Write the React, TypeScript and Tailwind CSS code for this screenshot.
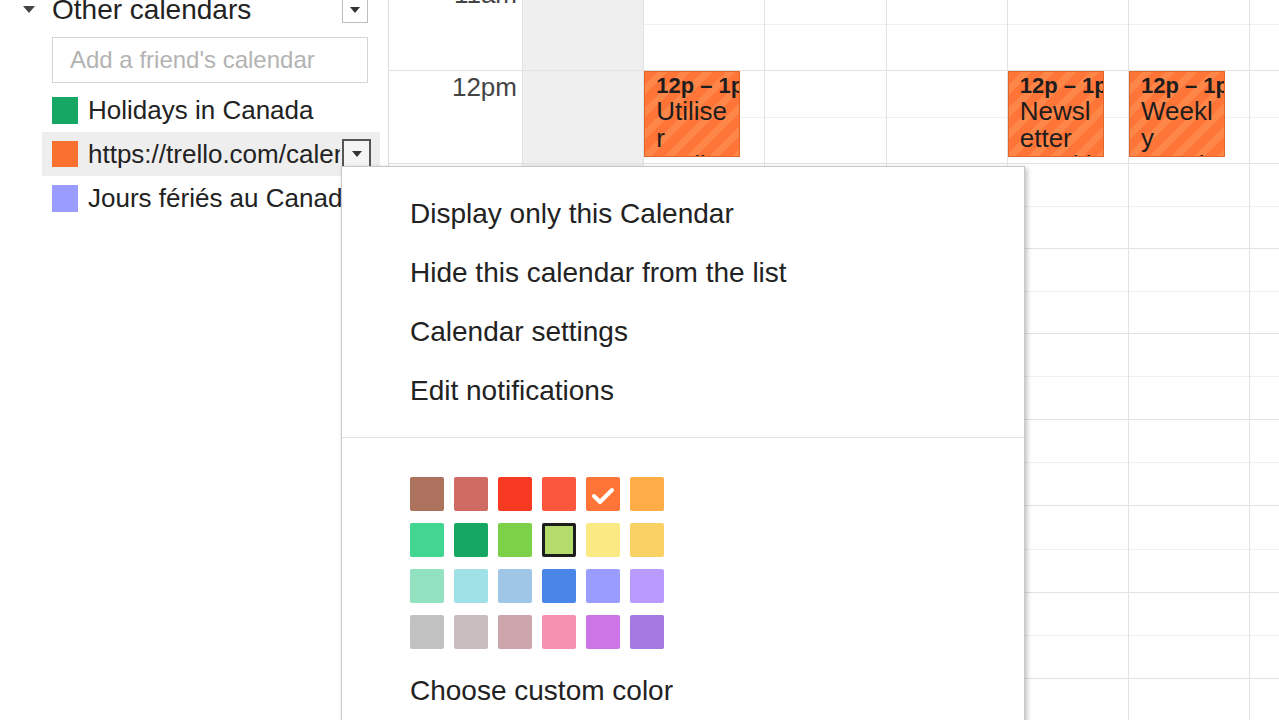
import React from "react";

const rowHeights = [93, 93, 85, 85, 86, 86, 87, 86, 85];
const timeLabels = ["11am", "12pm", "1pm", "2pm", "3pm", "4pm", "5pm", "6pm", "7pm"];

const palette = [
  ["#ac725e", "#d06b64", "#f83a22", "#fa573c", "#ff7537", "#ffad46"],
  ["#42d692", "#16a765", "#7bd148", "#b3dc6c", "#fbe983", "#fad165"],
  ["#92e1c0", "#9fe1e7", "#9fc6e7", "#4986e7", "#9a9cff", "#b99aff"],
  ["#c2c2c2", "#cabdbf", "#cca6ac", "#f691b2", "#cd74e6", "#a47ae2"],
];

const events: Record<number, { title: string }> = {
  1: { title: "Utiliser Trello" },
  4: { title: "Newsletter Weekly" },
  5: { title: "Weekly Meeting" },
};

function DropButton({ dark }: { dark?: boolean }) {
  return (
    <div
      className={
        dark
          ? "w-[29px] h-[30px] shrink-0 border-2 border-[#555] bg-[#f4f4f4] flex items-center justify-center"
          : "w-[26px] h-[26px] shrink-0 border border-[#bdbdbd] bg-white flex items-center justify-center"
      }
    >
      <svg width="12" height="8" viewBox="0 0 12 8">
        <polygon points="1,1 11,1 6,7" fill="#333" />
      </svg>
    </div>
  );
}

export default function App() {
  return (
    <div className="relative w-[1279px] h-[720px] overflow-hidden bg-white flex font-['Liberation_Sans',Arial,sans-serif] text-[#222]">
      {/* Sidebar */}
      <div className="w-[388px] shrink-0 flex flex-col">
        <div className="-mt-[5px] h-[30px] flex items-center">
          <div className="ml-[23px] w-[12px] flex items-center">
            <svg width="12" height="8" viewBox="0 0 12 8">
              <polygon points="0,0 12,0 6,7" fill="#444" />
            </svg>
          </div>
          <div className="ml-[17px] flex-1 text-[28px] leading-[30px] text-[#222]">Other calendars</div>
          <div className="mr-[20px]">
            <DropButton />
          </div>
        </div>
        <div className="mt-[12px] ml-[52px] w-[316px] h-[46px] border border-[#d4d4d4] flex items-center pl-[17px] text-[24px] text-[#b3b3b3]">
          Add a friend's calendar
        </div>
        <div className="mt-[5px] flex flex-col">
          <div className="ml-[42px] w-[338px] h-[44px] pl-[10px] flex items-center gap-[10px]">
            <div className="w-[26px] h-[27px] bg-[#16a765] shrink-0" />
            <div className="text-[26px] whitespace-nowrap">Holidays in Canada</div>
          </div>
          <div className="ml-[42px] w-[338px] h-[44px] pl-[10px] pr-[9px] flex items-center gap-[10px] bg-[#eeeeee]">
            <div className="w-[26px] h-[26px] bg-[#f8712f] shrink-0" />
            <div className="flex-1 min-w-0 overflow-hidden whitespace-nowrap text-[26px]">https://trello.com/calendar/</div>
            <div className="-ml-[8px]">
              <DropButton dark />
            </div>
          </div>
          <div className="ml-[42px] w-[338px] h-[44px] pl-[10px] flex items-center gap-[10px]">
            <div className="w-[26px] h-[27px] bg-[#9a9cff] shrink-0" />
            <div className="text-[26px] whitespace-nowrap">Jours fériés au Canada</div>
          </div>
        </div>
      </div>

      {/* Calendar grid */}
      <div className="flex-1 relative overflow-hidden border-l border-[#dcdcdc]">
        <div className="-mt-[23px] flex flex-col">
          {rowHeights.map((h, ri) => (
            <div key={ri} className="flex shrink-0" style={{ height: h }}>
              <div className="w-[133px] shrink-0 border-t border-[#e2e2e2] flex justify-end pr-[5px]">
                <div className="mt-[1px] text-[26px] leading-[30px] text-[#444]">{timeLabels[ri]}</div>
              </div>
              {Array.from({ length: 7 }).map((_, ci) => (
                <div
                  key={ci}
                  className={
                    "relative w-[121.2px] shrink-0 border-l border-t border-[#e2e2e2] flex flex-col " +
                    (ci === 0 ? "bg-[#efefef]" : "bg-white")
                  }
                >
                  <div className="flex-1 border-b border-[#f0f0f0]" />
                  <div className="flex-1" />
                  {ri === 1 && events[ci] && (
                    <div className="absolute left-0 top-0 w-[96px] h-[86px] overflow-hidden border border-[#e0662c] bg-[repeating-linear-gradient(135deg,#ff7537_0px,#ff7537_9px,#ff8649_9px,#ff8649_16px)] pl-[11px] pt-[2px] text-[#1d1d1d]">
                      <div className="whitespace-nowrap overflow-hidden text-[22px] font-bold leading-[24px]">12p – 1p</div>
                      <div className="pr-[8px] text-[26px] leading-[27px] break-words">{events[ci].title}</div>
                    </div>
                  )}
                </div>
              ))}
            </div>
          ))}
        </div>
      </div>

      {/* Dropdown menu */}
      <div className="absolute left-[341px] top-[166px] w-[684px] h-[600px] bg-white border border-[#c9c9c9] shadow-[2px_2px_5px_rgba(0,0,0,0.25)] flex flex-col">
        <div className="pt-[17px] pb-[17px] flex flex-col">
          {["Display only this Calendar", "Hide this calendar from the list", "Calendar settings", "Edit notifications"].map((t) => (
            <div key={t} className="h-[59px] flex items-center pl-[68px] text-[28px] text-[#222] whitespace-nowrap">
              {t}
            </div>
          ))}
        </div>
        <div className="h-px bg-[#e3e3e3]" />
        <div className="mt-[39px] ml-[68px] flex flex-col gap-[12px]">
          {palette.map((row, ri) => (
            <div key={ri} className="flex gap-[10px]">
              {row.map((c, ci) => {
                const selected = ri === 0 && ci === 4;
                const hovered = ri === 1 && ci === 3;
                return (
                  <div
                    key={c}
                    className={
                      "w-[34px] h-[34px] rounded-[2px] flex items-center justify-center " +
                      (hovered ? "border-[3px] border-[#1e1e1e]" : "")
                    }
                    style={{ backgroundColor: c }}
                  >
                    {selected && (
                      <svg width="34" height="34" viewBox="0 0 34 34">
                        <polyline points="8,19 14,25 26,13" fill="none" stroke="#fff" strokeWidth="4" strokeLinecap="round" strokeLinejoin="round" />
                      </svg>
                    )}
                  </div>
                );
              })}
            </div>
          ))}
        </div>
        <div className="mt-[26px] ml-[68px] text-[28px] leading-[32px] text-[#222]">Choose custom color</div>
      </div>
    </div>
  );
}
